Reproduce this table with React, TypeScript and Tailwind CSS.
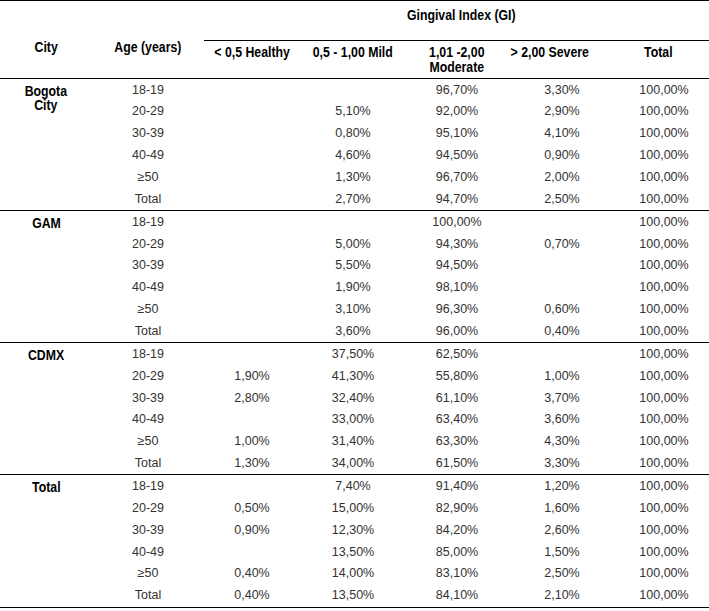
import React from 'react';

type Group = {
  city: string[];
  rows: [string, string, string, string, string, string][];
};

const groups: Group[] = [
  {
    city: ['Bogota', 'City'],
    rows: [
      ['18-19', '', '', '96,70%', '3,30%', '100,00%'],
      ['20-29', '', '5,10%', '92,00%', '2,90%', '100,00%'],
      ['30-39', '', '0,80%', '95,10%', '4,10%', '100,00%'],
      ['40-49', '', '4,60%', '94,50%', '0,90%', '100,00%'],
      ['≥50', '', '1,30%', '96,70%', '2,00%', '100,00%'],
      ['Total', '', '2,70%', '94,70%', '2,50%', '100,00%'],
    ],
  },
  {
    city: ['GAM'],
    rows: [
      ['18-19', '', '', '100,00%', '', '100,00%'],
      ['20-29', '', '5,00%', '94,30%', '0,70%', '100,00%'],
      ['30-39', '', '5,50%', '94,50%', '', '100,00%'],
      ['40-49', '', '1,90%', '98,10%', '', '100,00%'],
      ['≥50', '', '3,10%', '96,30%', '0,60%', '100,00%'],
      ['Total', '', '3,60%', '96,00%', '0,40%', '100,00%'],
    ],
  },
  {
    city: ['CDMX'],
    rows: [
      ['18-19', '', '37,50%', '62,50%', '', '100,00%'],
      ['20-29', '1,90%', '41,30%', '55,80%', '1,00%', '100,00%'],
      ['30-39', '2,80%', '32,40%', '61,10%', '3,70%', '100,00%'],
      ['40-49', '', '33,00%', '63,40%', '3,60%', '100,00%'],
      ['≥50', '1,00%', '31,40%', '63,30%', '4,30%', '100,00%'],
      ['Total', '1,30%', '34,00%', '61,50%', '3,30%', '100,00%'],
    ],
  },
  {
    city: ['Total'],
    rows: [
      ['18-19', '', '7,40%', '91,40%', '1,20%', '100,00%'],
      ['20-29', '0,50%', '15,00%', '82,90%', '1,60%', '100,00%'],
      ['30-39', '0,90%', '12,30%', '84,20%', '2,60%', '100,00%'],
      ['40-49', '', '13,50%', '85,00%', '1,50%', '100,00%'],
      ['≥50', '0,40%', '14,00%', '83,10%', '2,50%', '100,00%'],
      ['Total', '0,40%', '13,50%', '84,10%', '2,10%', '100,00%'],
    ],
  },
];

const cols = 'grid grid-cols-[92px_112px_96px_106px_102px_104px_97px]';
const headCell = 'flex justify-center items-start';
const body = "font-['Liberation_Sans',Arial,sans-serif] text-[12.5px] text-[#333]";

// narrow bold label: Liberation Sans Bold squeezed to look like a condensed face
function H({ children, lh = 'leading-[15px]' }: { children: React.ReactNode; lh?: string }) {
  return (
    <span className={`block text-center whitespace-nowrap scale-x-[0.82] font-['Liberation_Sans',Arial,sans-serif] font-bold text-[15px] ${lh} text-black`}>
      {children}
    </span>
  );
}

export default function App() {
  return (
    <div className="w-[709px] h-[611px] bg-white overflow-hidden">
      {/* header */}
      <div className={`${cols} border-t border-b border-black h-[79px]`}>
        <div className={`${headCell} pt-[38px]`}><H>City</H></div>
        <div className={`${headCell} pt-[38px]`}><H>Age (years)</H></div>
        <div className="col-span-5 flex flex-col">
          <div className={`${headCell} h-[40px] border-b border-black pt-[6px] pl-[10px]`}>
            <H>Gingival Index (GI)</H>
          </div>
          <div className="grid grid-cols-[96px_106px_102px_104px_97px] pt-[3px]">
            <div className={headCell}><H>&lt; 0,5 Healthy</H></div>
            <div className={headCell}><H>0,5 - 1,00 Mild</H></div>
            <div className={headCell}>
              <H>
                1,01 -2,00
                <br />
                Moderate
              </H>
            </div>
            <div className={`${headCell} pr-[20px]`}><H>&gt; 2,00 Severe</H></div>
            <div className={`${headCell} pr-[5px]`}><H>Total</H></div>
          </div>
        </div>
      </div>

      {/* body */}
      {groups.map((g) => (
        <div key={g.city.join(' ')} className={`${cols} border-b border-black`}>
          <div className={`${headCell} row-span-6 pt-[5px]`}>
            <H lh="leading-[14px]">
              {g.city.map((c, k) => (
                <React.Fragment key={c}>
                  {k > 0 && <br />}
                  {c}
                </React.Fragment>
              ))}
            </H>
          </div>
          {g.rows.map((r, i) => (
            <React.Fragment key={i}>
              {r.map((v, j) => (
                <div
                  key={j}
                  className={`${body} h-[21.87px] flex items-center justify-center ${j === 4 ? 'pl-[4px]' : ''} ${j === 5 ? 'pl-[7px]' : ''}`}
                >
                  {v}
                </div>
              ))}
            </React.Fragment>
          ))}
        </div>
      ))}
    </div>
  );
}
